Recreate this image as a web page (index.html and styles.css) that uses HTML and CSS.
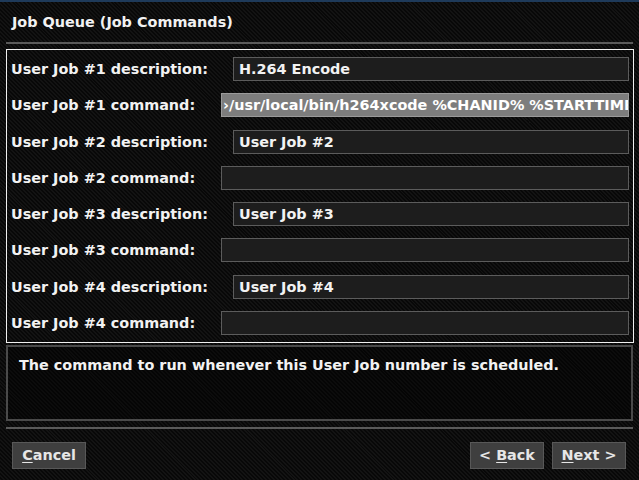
FILE: index.html
```
<!DOCTYPE html>
<html>
<head>
<meta charset="utf-8">
<link rel="stylesheet" href="styles.css">
</head>
<body>
<div class="screen">
  <div class="topline"></div>
  <div class="title">Job Queue (Job Commands)</div>
  <div class="sep"></div>
  <div class="form">
    <div class="row"><span class="label">User Job #1 description:</span><div class="field desc">H.264 Encode</div></div>
    <div class="row"><span class="label">User Job #1 command:</span><div class="field cmd focus">›/usr/local/bin/h264xcode %CHANID% %STARTTIME%</div></div>
    <div class="row"><span class="label">User Job #2 description:</span><div class="field desc">User Job #2</div></div>
    <div class="row"><span class="label">User Job #2 command:</span><div class="field cmd"></div></div>
    <div class="row"><span class="label">User Job #3 description:</span><div class="field desc">User Job #3</div></div>
    <div class="row"><span class="label">User Job #3 command:</span><div class="field cmd"></div></div>
    <div class="row"><span class="label">User Job #4 description:</span><div class="field desc">User Job #4</div></div>
    <div class="row"><span class="label">User Job #4 command:</span><div class="field cmd"></div></div>
  </div>
  <div class="help">The command to run whenever this User Job number is scheduled.</div>
  <div class="sep sep2"></div>
  <div class="buttons">
    <div class="btn btn-cancel"><u>C</u>ancel</div>
    <div class="spacer"></div>
    <div class="btn btn-back">&lt; <u>B</u>ack</div>
    <div class="btn btn-next"><u>N</u>ext &gt;</div>
  </div>
</div>
</body>
</html>
```
FILE: styles.css
```
html, body {
  margin: 0;
  padding: 0;
}
body {
  width: 639px;
  height: 480px;
  overflow: hidden;
  background: #0b0b0b;
  font-family: "DejaVu Sans", "Liberation Sans", sans-serif;
  font-weight: bold;
  font-size: 14.4px;
  color: #f2f2f2;
}
.screen {
  width: 639px;
  height: 480px;
  display: flex;
  flex-direction: column;
  background: repeating-linear-gradient(45deg, #131313 0 1.4px, #080808 1.4px 2.8px);
}
.topline {
  height: 2px;
  background: #1e3a5a;
}
.title {
  height: 40px;
  line-height: 40px;
  padding-left: 12px;
  box-sizing: border-box;
}
.sep {
  height: 2px;
  margin: 0 6px;
  background: #5a5a5a;
}
.form {
  margin: 5px 5px 0 6px;
  height: 294px;
  box-sizing: border-box;
  border: 1px solid #f0f0f0;
  padding: 7px 4px 0 4px;
  display: flex;
  flex-direction: column;
  gap: 12.3px;
}
.row {
  display: flex;
  align-items: center;
  height: 24px;
}
.label {
  width: 210px;
  flex: none;
  white-space: nowrap;
}
.field {
  flex: 1;
  height: 24px;
  box-sizing: border-box;
  border: 1px solid #5c5c5c;
  background: #1d1d1d;
  line-height: 22px;
  padding-left: 5px;
  white-space: nowrap;
  overflow: hidden;
}
.field.desc {
  margin-left: 12px;
}
.field.focus {
  background: #7d7d7d;
  border-color: #9a9a9a;
  padding-left: 1px;
  color: #ffffff;
}
.help {
  margin: 2px 6px 0 6px;
  height: 76px;
  box-sizing: border-box;
  border: 2px solid #4a4a4a;
  background: rgba(0, 0, 0, 0.35);
  padding: 9px 0 0 11px;
  line-height: 18px;
}
.sep2 {
  margin-top: 6px;
}
.buttons {
  display: flex;
  padding: 12px 13px 0 10px;
  gap: 8px;
}
.spacer {
  flex: 1;
}
.btn {
  height: 27px;
  box-sizing: border-box;
  background: #3f3f3f;
  border: 1px solid #585858;
  color: #e6e6e6;
  line-height: 25px;
  text-align: center;
  margin-top: 1px;
}
.btn u {
  text-decoration-thickness: 1px;
  text-underline-offset: 2px;
}
.btn-cancel {
  width: 74px;
  margin-left: 2px;
}
.btn-back {
  width: 74px;
}
.btn-next {
  width: 74px;
}
```
